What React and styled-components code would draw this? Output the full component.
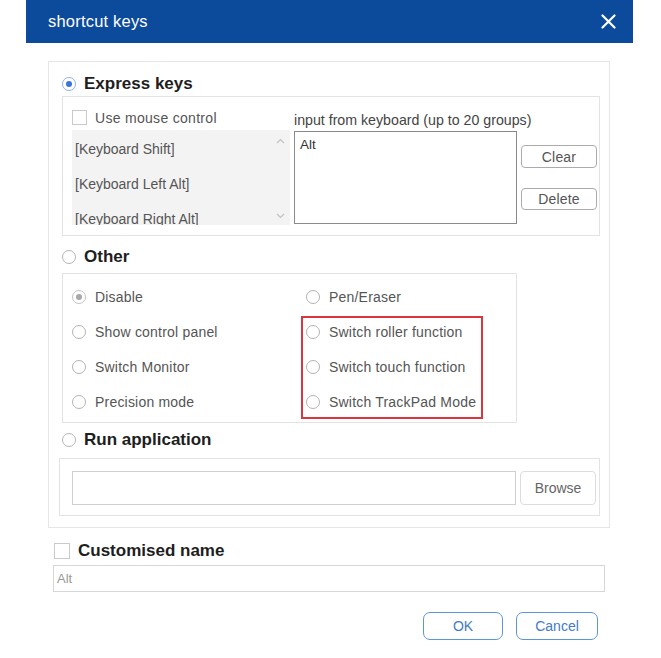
import React from "react";
import styled, { createGlobalStyle } from "styled-components";

const Global = createGlobalStyle`
  html, body { margin: 0; padding: 0; background: #fff; }
  body { font-family: "Liberation Sans", Arial, sans-serif; }
  * { box-sizing: border-box; }
`;

const Page = styled.div`
  width: 661px;
  height: 658px;
  background: #fff;
  overflow: hidden;
`;

const TitleBar = styled.div`
  margin-left: 26px;
  width: 607px;
  height: 43px;
  background: #0c4b9c;
  display: flex;
  align-items: center;
  justify-content: space-between;
  padding: 0 16px 0 22px;
  color: #fff;
  font-size: 16.5px;
  letter-spacing: 0.2px;
`;

const CloseBtn = styled.button`
  border: none;
  background: none;
  padding: 0;
  width: 18px;
  height: 18px;
  display: flex;
  align-items: center;
  justify-content: center;
  cursor: pointer;
`;

const Panel = styled.div`
  margin: 18px 0 0 48px;
  width: 562px;
  border: 1px solid #e6e6e6;
  padding: 12px 9px 11px 13px;
`;

const Header = styled.div`
  display: flex;
  align-items: center;
  height: 20px;
  gap: 8px;
  margin-top: ${(p) => p.$mt || 0}px;
  font-size: 17px;
  font-weight: bold;
  color: #1e1e1e;
`;

const RadioCircle = styled.span`
  width: 14px;
  height: 14px;
  border-radius: 50%;
  border: 1px solid ${(p) => (p.$on ? "#8fb3e6" : p.$dim ? "#c4c4c4" : "#b4b4b4")};
  background: #fff;
  flex: none;
  display: flex;
  align-items: center;
  justify-content: center;
  &::after {
    content: "";
    width: 6px;
    height: 6px;
    border-radius: 50%;
    background: ${(p) => (p.$on ? "#3a74dc" : p.$dim ? "#a8a8a8" : "transparent")};
  }
`;

const Check = styled.span`
  width: ${(p) => p.$size || 15}px;
  height: ${(p) => p.$size || 15}px;
  border: 1px solid #cacaca;
  background: #fff;
  flex: none;
`;

const Box = styled.div`
  border: 1px solid #e3e3e3;
  margin-top: ${(p) => p.$mt || 0}px;
`;

const ExpressBox = styled(Box)`
  padding: 11px 0 10px 9px;
  display: grid;
  grid-template-columns: 218px 223px 76px;
  grid-template-rows: 22px 95px;
  column-gap: 4px;
`;

const CheckRow = styled.label`
  display: flex;
  align-items: center;
  gap: 8px;
  font-size: 14px;
  color: #555;
  letter-spacing: 0.3px;
  padding-bottom: 3px;
`;

const InputLabel = styled.div`
  font-size: 14.2px;
  color: #444;
  display: flex;
  align-items: flex-end;
  padding-bottom: 2px;
  white-space: nowrap;
`;

const KeyList = styled.div`
  grid-column: 1;
  grid-row: 2;
  background: #f3f3f3;
  display: flex;
  overflow: hidden;
`;

const KeyItems = styled.div`
  flex: 1;
  padding-top: 1px;
`;

const KeyItem = styled.div`
  height: 35px;
  display: flex;
  align-items: center;
  padding-left: 3px;
  font-size: 14px;
  color: #555;
  white-space: nowrap;
`;

const ScrollBar = styled.div`
  width: 14px;
  display: flex;
  flex-direction: column;
  justify-content: space-between;
  align-items: center;
  padding: 8px 0 6px;
  margin-right: 3px;
`;

const TextArea = styled.div`
  grid-column: 2;
  grid-row: 2;
  margin-top: 1px;
  height: 93px;
  border: 1px solid #8a8a8a;
  background: #fff;
  padding: 5px 5px;
  font-size: 13.5px;
  color: #333;
`;

const SideButtons = styled.div`
  grid-column: 3;
  grid-row: 2;
  display: flex;
  flex-direction: column;
  padding-top: 15px;
  gap: 20px;
`;

const GrayButton = styled.button`
  height: ${(p) => p.$h || 23}px;
  width: 100%;
  border: 1px solid #ababab;
  border-radius: 4px;
  background: #fff;
  font-family: inherit;
  font-size: 14px;
  color: #555;
  padding: 0;
  letter-spacing: 0.2px;
`;

const OtherBox = styled(Box)`
  width: 455px;
  padding: 5px 0 3px 9px;
  display: flex;
`;

const Column = styled.div`
  display: flex;
  flex-direction: column;
  width: ${(p) => (p.$w ? `${p.$w}px` : "auto")};
`;

const OptionRow = styled.label`
  height: 35px;
  display: flex;
  align-items: center;
  gap: 9px;
  font-size: 14px;
  color: #555;
  letter-spacing: 0.2px;
  white-space: nowrap;
`;

const Highlight = styled.div`
  position: relative;
  display: flex;
  flex-direction: column;
  &::after {
    content: "";
    position: absolute;
    top: 2px;
    bottom: 0;
    left: -5px;
    width: 178px;
    border: 2px solid #d9363e;
    pointer-events: none;
  }
`;

const RunBox = styled(Box)`
  margin-left: -3px;
  width: 541px;
  padding: 12px 3px 10px 12px;
  display: flex;
  gap: 4px;
`;

const PathInput = styled.div`
  width: 445px;
  height: 34px;
  border: 1px solid #cfcfcf;
  background: #fff;
`;

const BrowseButton = styled.button`
  width: 76px;
  height: 34px;
  border: 1px solid #dcdcdc;
  border-radius: 4px;
  background: #fff;
  font-family: inherit;
  font-size: 14px;
  color: #666;
  padding: 0;
`;

const NameSection = styled.div`
  margin-left: 53px;
  width: 552px;
`;

const NameHeader = styled.div`
  margin-top: 15px;
  height: 16px;
  display: flex;
  align-items: center;
  gap: 8px;
  padding-left: 1px;
  font-size: 17px;
  font-weight: bold;
  color: #1e1e1e;
`;

const NameInput = styled.div`
  margin-top: 6px;
  height: 27px;
  border: 1px solid #d6d6d6;
  display: flex;
  align-items: center;
  padding-left: 3px;
  font-size: 13px;
  color: #999;
`;

const Footer = styled.div`
  margin-top: 20px;
  display: flex;
  justify-content: flex-end;
  gap: 13px;
  padding-right: 7px;
`;

const BlueButton = styled.button`
  width: ${(p) => p.$w}px;
  height: 28px;
  border: 1.5px solid #5b96d8;
  border-radius: 7px;
  background: #fff;
  font-family: inherit;
  font-size: 14px;
  color: #3f7cc6;
  padding: 0;
`;

const Chevron = ({ up }) => (
  <svg width="9" height="6" viewBox="0 0 9 6">
    <path
      d={up ? "M1 5 L4.5 1.5 L8 5" : "M1 1 L4.5 4.5 L8 1"}
      fill="none"
      stroke="#c2c2c2"
      strokeWidth="1.2"
    />
  </svg>
);

const Option = ({ children, dim }) => (
  <OptionRow>
    <RadioCircle $dim={dim} />
    {children}
  </OptionRow>
);

export default function App() {
  return (
    <>
      <Global />
      <Page>
        <TitleBar>
          <span>shortcut keys</span>
          <CloseBtn aria-label="close">
            <svg width="15" height="15" viewBox="0 0 15 15">
              <path d="M1.5 1.5 L13.5 13.5 M13.5 1.5 L1.5 13.5" stroke="#fff" strokeWidth="2.2" strokeLinecap="round" />
            </svg>
          </CloseBtn>
        </TitleBar>

        <Panel>
          <Header>
            <RadioCircle $on />
            Express keys
          </Header>
          <ExpressBox $mt={2}>
            <CheckRow>
              <Check />
              Use mouse control
            </CheckRow>
            <InputLabel>input from keyboard (up to 20 groups)</InputLabel>
            <div />
            <KeyList>
              <KeyItems>
                <KeyItem>[Keyboard Shift]</KeyItem>
                <KeyItem>[Keyboard Left Alt]</KeyItem>
                <KeyItem>[Keyboard Right Alt]</KeyItem>
              </KeyItems>
              <ScrollBar>
                <Chevron up />
                <Chevron />
              </ScrollBar>
            </KeyList>
            <TextArea>Alt</TextArea>
            <SideButtons>
              <GrayButton $h={23}>Clear</GrayButton>
              <GrayButton $h={22}>Delete</GrayButton>
            </SideButtons>
          </ExpressBox>

          <Header $mt={11}>
            <RadioCircle />
            Other
          </Header>
          <OtherBox $mt={6}>
            <Column $w={234}>
              <Option dim>Disable</Option>
              <Option>Show control panel</Option>
              <Option>Switch Monitor</Option>
              <Option>Precision mode</Option>
            </Column>
            <Column>
              <Option>Pen/Eraser</Option>
              <Highlight>
                <Option>Switch roller function</Option>
                <Option>Switch touch function</Option>
                <Option>Switch TrackPad Mode</Option>
              </Highlight>
            </Column>
          </OtherBox>

          <Header $mt={7}>
            <RadioCircle />
            Run application
          </Header>
          <RunBox $mt={8}>
            <PathInput />
            <BrowseButton>Browse</BrowseButton>
          </RunBox>
        </Panel>

        <NameSection>
          <NameHeader>
            <Check $size={16} />
            Customised name
          </NameHeader>
          <NameInput>Alt</NameInput>
          <Footer>
            <BlueButton $w={80}>OK</BlueButton>
            <BlueButton $w={82}>Cancel</BlueButton>
          </Footer>
        </NameSection>
      </Page>
    </>
  );
}
